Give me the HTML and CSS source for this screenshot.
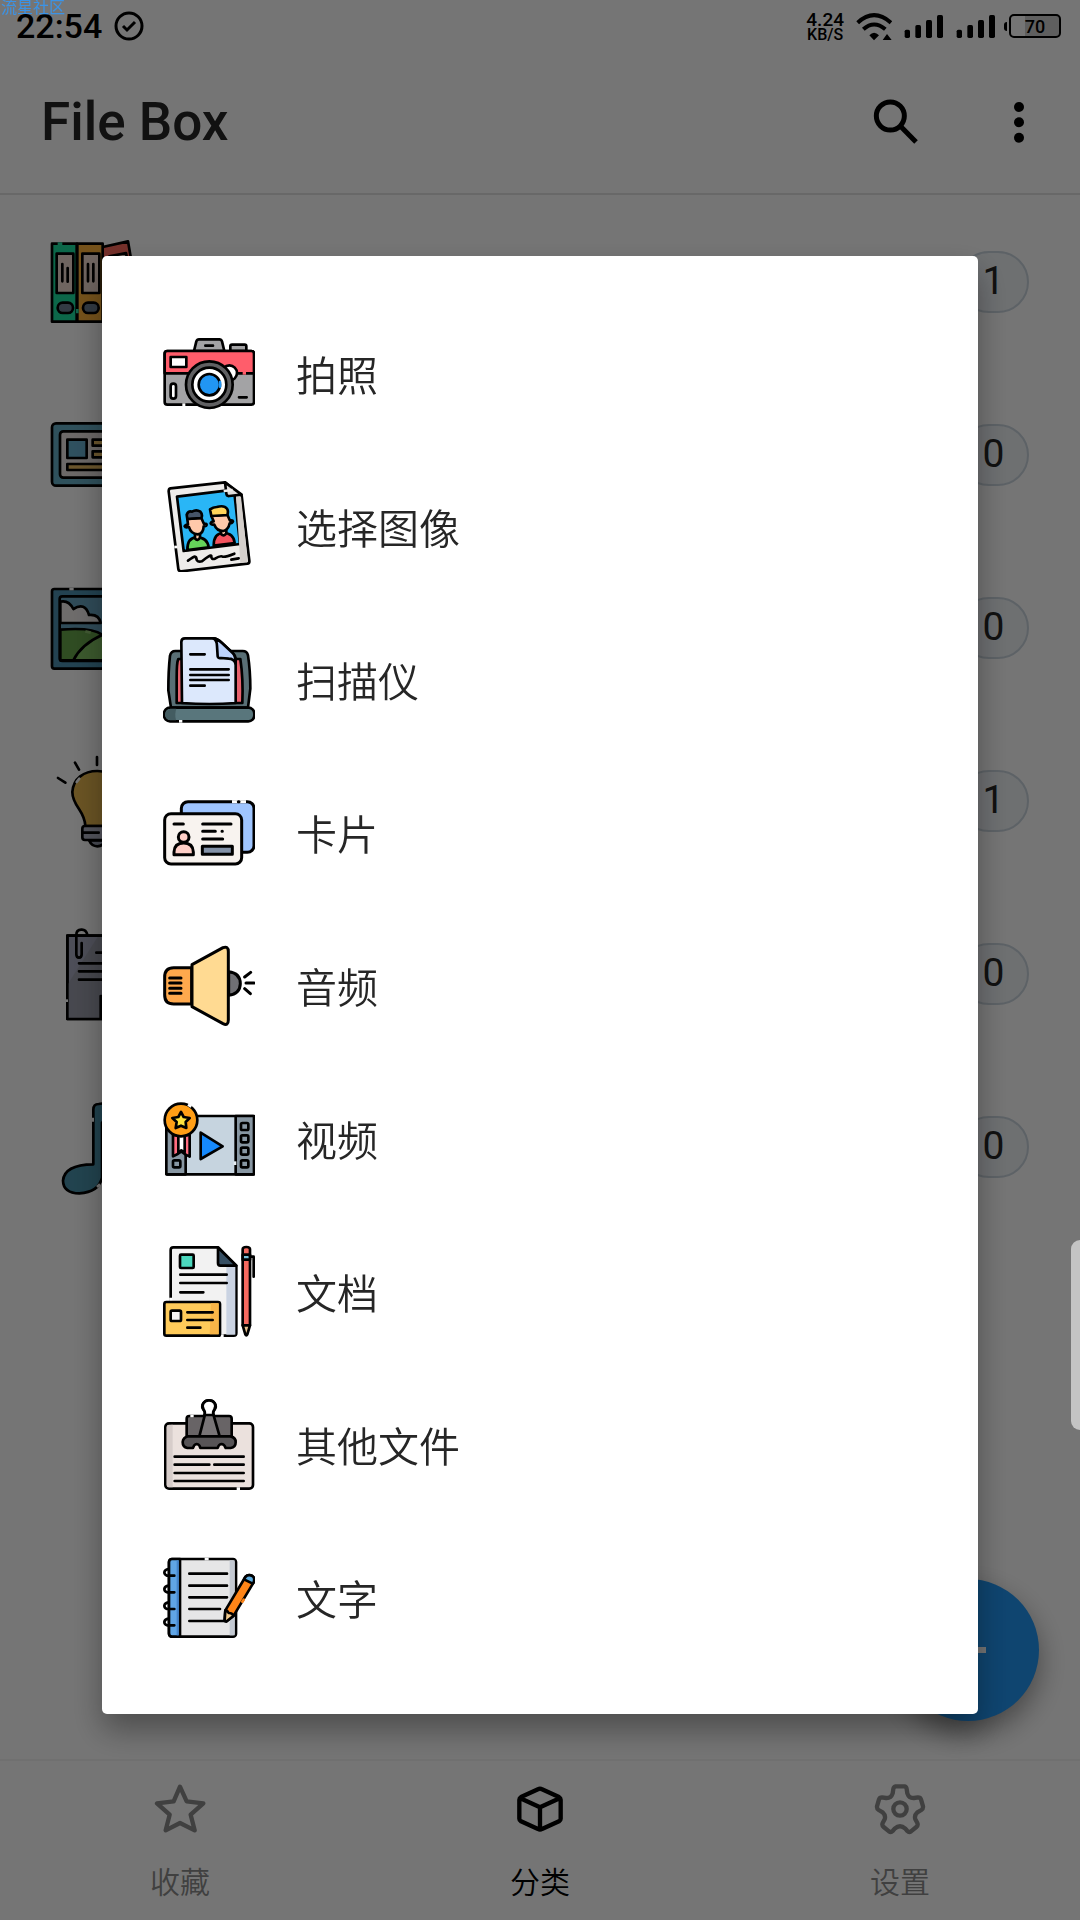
FILE: index.html
```html
<!DOCTYPE html>
<html lang="zh-CN">
<head>
<meta charset="utf-8">
<meta name="viewport" content="width=device-width, initial-scale=1">
<title>File Box</title>
<link rel="stylesheet" href="styles.css">
</head>
<body>
<div class="app">
  <div class="status">
    <span class="clock">22:54</span>
    <svg class="status-check" viewBox="0 0 30 30"><circle cx="15" cy="15" r="13" fill="none" stroke="#000" stroke-width="3"/><path d="M9 15l4 4 8-8" fill="none" stroke="#000" stroke-width="3"/></svg>
    <div class="status-right">
      <div class="speed"><span class="speed-value">4.24</span><span class="speed-unit">KB/S</span></div>
      <svg class="wifi" viewBox="286 30 108 90"><g fill="none" stroke="#000" stroke-width="12"><path d="M291 65Q340 20 391 65"/><path d="M308 85Q340 56 374 85"/></g><path d="M326 103Q340 87 355 103L340 118ZM366 117L379 99L393 117Z"/></svg>
      <svg class="signal" viewBox="432 36 120 78"><rect x="434" y="86" width="16" height="25" rx="5"/><rect x="466" y="72" width="17" height="39" rx="5"/><rect x="498" y="57" width="18" height="54" rx="5"/><rect x="531" y="42" width="18" height="69" rx="5"/></svg>
      <svg class="signal" viewBox="432 36 120 78"><rect x="434" y="86" width="16" height="25" rx="5"/><rect x="466" y="72" width="17" height="39" rx="5"/><rect x="498" y="57" width="18" height="54" rx="5"/><rect x="531" y="42" width="18" height="69" rx="5"/></svg>
      <div class="battery"><span class="battery-tip"></span><span class="battery-body">70</span></div>
    </div>
  </div>

  <header class="appbar">
    <h1 class="title">File Box</h1>
    <button class="icon-button" aria-label="搜索"><svg viewBox="332 294 144 144"><circle cx="390" cy="348" r="42" fill="none" stroke="#000" stroke-width="15"/><path d="M422 380L467 426" stroke="#000" stroke-width="15"/></svg></button>
    <button class="icon-button" aria-label="更多"><svg viewBox="705 294 144 144"><circle cx="777" cy="321" r="15"/><circle cx="777" cy="367" r="15"/><circle cx="777" cy="413" r="15"/></svg></button>
  </header>

  <main class="categories">
    <div class="category">
      <svg class="category-icon line" viewBox="54 39 288 288">
        <path d="M218 78L294 61L332 280L260 300L218 110Z" fill="#ff6b5e"/><path d="M238 106L288 96L302 165L256 175Z" fill="#f2dcd2"/>
        <path d="M66 68H140V302H66Z" fill="#1ce0a0"/><path d="M142 68H218V302H142Z" fill="#ffb43c"/>
        <rect x="80" y="98" width="50" height="118" fill="#f2dcd2"/><rect x="157" y="98" width="51" height="118" fill="#f2dcd2"/>
        <path d="M97 129V181M113 141V182M174 129V181M190 129V181" fill="none"/>
        <rect x="83" y="245" width="46" height="31" rx="15" fill="#6d7f92"/><rect x="159" y="245" width="47" height="31" rx="15" fill="#6d7f92"/>
        <path d="M83 68H97M142 264V277" stroke="#2bdca2" stroke-width="8" stroke-linecap="butt"/>
      </svg>
      <span class="badge">1</span>
    </div>
    <div class="category">
      <svg class="category-icon line" viewBox="54 558 288 288">
        <rect x="66" y="607" width="258" height="187" rx="12" fill="#68b0c8"/><rect x="90" y="631" width="210" height="139" rx="10" fill="#ebe4e2"/>
        <path d="M112 656H170V711H112Z" fill="#68b0d0"/><path d="M188 656H275V674H188ZM188 691H275V709H188ZM112 729H275V747H112Z" fill="#e8bb62"/>
      </svg>
      <span class="badge">0</span>
    </div>
    <div class="category">
      <svg class="category-icon line" viewBox="54 -3 288 288">
        <rect x="66" y="24" width="258" height="239" rx="7" fill="#4c91b0"/><rect x="89" y="46" width="212" height="194" rx="8" fill="#68a4c0"/>
        <path d="M91 146Q185 138 216 161L299 238H91Z" fill="#67a54b"/><path d="M130 238Q154 190 216 162Q260 152 300 156V238Z" fill="#82c263"/>
        <path d="M91 62Q116 56 130 84Q165 62 177 102Q207 99 212 126H91Z" fill="#efebea"/>
        <path d="M118 24H131" stroke="#fff" stroke-linecap="butt"/><path d="M166 151L182 155" stroke="#8fc270" stroke-linecap="butt"/>
      </svg>
      <span class="badge">0</span>
    </div>
    <div class="category">
      <svg class="category-icon line" viewBox="54 516 288 288">
        <path d="M166 735Q165 711 147 684Q127 655 127 633C130 592 162 570 202 570C245 570 276 600 276 640C276 680 239 708 237 735Z" fill="#e8b84f"/>
        <path d="M177 778Q185 796 202 796Q220 796 227 778Z" fill="#9ba1b3"/><rect x="157" y="735" width="88" height="42" rx="8" fill="#b4b7c8"/><path d="M158 755H206" fill="none"/>
        <path d="M84 591L106 605M135 545L147 566M201 528V552" fill="none"/><path d="M140 603L148 593" stroke="#fff"/>
      </svg>
      <span class="badge">1</span>
    </div>
    <div class="category">
      <svg class="category-icon line" viewBox="54 75 288 288">
        <path d="M112 104H300V354H112Z" fill="#a8aabf"/><path d="M112 252L205 104H300V270L212 280V354H112Z" fill="#9c9eac" stroke="none"/><path d="M112 104H300V354H112ZM212 354V285H300" fill="none"/>
        <path d="M172 101Q168 85 154 86Q139 87 139 101V160Q139 170 147 170Q155 170 155 160V126M199 155H260M147 187H260M147 211H260M147 236H260" fill="none"/>
        <path d="M110 295V303" stroke="#fff" stroke-linecap="butt"/>
      </svg>
      <span class="badge">0</span>
    </div>
    <div class="category">
      <svg class="category-icon line" viewBox="54 594 288 288">
        <path d="M190 790V626Q190 609 206 609L315 594V795Q316 840 260 845Q224 847 221 820Q218 787 255 770L280 765V650L216 665V830Q206 874 148 877Q100 876 99 839Q103 791 190 790Z" fill="#4a93ac"/>
        <path d="M188 650V662M201 858L210 850" stroke="#fff" stroke-linecap="butt"/>
      </svg>
      <span class="badge">0</span>
    </div>
  </main>

  <button class="fab" aria-label="添加"><svg viewBox="0 0 36 36"><path d="M18 0V36M0 18H36" stroke="#fff" stroke-width="6"/></svg></button>

  <nav class="tabs">
    <a class="tab" href="#favorites"><svg viewBox="162 97 156 156"><path d="M240 108L260 152L310 158L272 192L284 239L240 217L197 239L209 192L171 158L221 152Z"/></svg><span>收藏</span></a>
    <a class="tab tab-active" href="#categories"><svg viewBox="1242 99 156 156"><path d="M1314 118Q1320 114 1326 118L1377 141Q1382 144 1382 149V206Q1382 211 1377 214L1326 237Q1320 241 1314 237L1263 214Q1258 211 1258 206V149Q1258 144 1263 141ZM1261 145L1320 172L1379 145M1320 172V238"/></svg><span>分类</span></a>
    <a class="tab" href="#settings"><svg viewBox="222 729 156 156"><path d="M287 739H314Q319 740 320 747L322 760Q327 775 342 774L354 772Q361 772 363 778L369 799Q370 806 364 810L352 817Q342 826 346 838L352 849Q355 856 349 861L333 874Q327 878 322 873L316 866Q300 852 284 866L278 873Q273 878 267 874L251 861Q245 856 248 849L254 838Q258 826 248 817L236 810Q230 806 231 799L237 778Q239 772 246 772L258 774Q273 775 278 760L280 747Q281 740 287 739Z"/><circle cx="300" cy="807" r="20"/></svg><span>设置</span></a>
  </nav>
</div>

<div class="scrim">
  <div class="dialog" role="dialog" aria-modal="true" aria-label="添加">
    <button class="option">
      <svg class="line" viewBox="399 320 276 276">
        <path d="M601 392V378Q601 373 606 373H644Q649 373 649 378V392Z" fill="#a3a3a5"/><path d="M492 392L499 363Q501 357 507 357H568Q574 357 576 363L583 392Z" fill="#a3a3a5"/>
        <rect x="404" y="392" width="268" height="161" rx="8" fill="#a3a3a5"/><path d="M404 459V400Q404 392 412 392H664Q672 392 672 400V459Z" fill="#ff5d6b"/>
        <circle cx="598" cy="458" r="23" fill="#fff"/><rect x="422" y="410" width="47" height="30" fill="#fff"/><rect x="422" y="490" width="16" height="45" rx="8" fill="#fff"/>
        <circle cx="538" cy="493" r="70" fill="#606062"/><circle cx="538" cy="493" r="51" fill="#fff"/><circle cx="538" cy="493" r="32" fill="#2196f3"/>
        <path d="M526 376H549M627 531H650" fill="none"/><path d="M457 553H466" stroke="#fff" stroke-linecap="butt"/><path d="M638 459H648" stroke="#ff5d6b" stroke-linecap="butt"/><path d="M570 485V499" stroke="#2196f3"/>
      </svg>
      <span>拍照</span>
    </button>
    <button class="option">
      <svg class="line" viewBox="399 778 276 276">
        <path d="M421 803L585 785L635 825L658 1020Q659 1028 652 1029L454 1052Q446 1052 445 1045L416 812Q416 804 421 803Z" fill="#eeecea"/>
        <path d="M441 828L612 807L630 970L461 991Z" fill="#29b6f6"/><path d="M618 828H633L653 1024L631 1027Z" fill="#d4cfcb" stroke="none"/>
        <path d="M585 785L589 819Q590 827 598 826L635 822Z" fill="#e0dddb"/>
        <path d="M472 988Q472 950 500 950Q532 950 536 980Z" fill="#66d45a"/><path d="M551 975Q551 937 580 937Q611 937 614 967Z" fill="#f4535e"/>
        <path d="M495 937V953Q503 963 510 951V935ZM573 926V940Q582 949 589 938V922Z" fill="#ffc9aa"/>
        <path d="M472 895Q486 893 492 893L514 892L522 910Q530 908 530 912Q529 917 521 917Q520 940 503 941Q482 939 477 919Q466 922 464 917Q465 913 474 911Z" fill="#ffc9aa"/>
        <path d="M472 895L470 882Q475 870 486 873Q499 865 511 873Q519 882 514 892L486 894Z" fill="#465468"/>
        <path d="M544 886L592 882L600 900Q608 898 609 902Q607 908 599 908Q595 928 580 931Q560 931 553 912Q543 912 542 908Q543 903 551 902Z" fill="#ffc9aa"/><path d="M544 886L540 866Q549 860 560 859Q583 853 591 864Q596 871 592 883Z" fill="#ffd35a"/>
        <path d="M474 1020Q491 1008 494 1008Q499 1009 499 1014Q501 1026 516 1022Q542 1000 544 1006Q543 1018 555 1014Q571 1004 578 1008Q585 1010 613 999M604 1017L626 1013" fill="none"/><path d="M581 811L608 808" stroke="#eeecea" stroke-linecap="butt"/><path d="M437 975V983" stroke="#fff" stroke-linecap="butt"/>
      </svg>
      <span>选择图像</span>
    </button>
    <button class="option">
      <svg class="line" viewBox="399 158 276 276">
        <path d="M423 382L415 330Q415 270 420 226Q423 212 436 212H638Q651 212 654 225Q661 270 661 325L654 382Z" fill="#596f75"/><path d="M448 368H440V292Q440 245 445 236H631Q640 295 637 368Z" fill="#e8636f"/>
        <path d="M456 368L454 185Q454 174 465 174H550Q561 174 576 188L608 218Q617 226 617 239V368Q540 374 456 368Z" fill="#dce8fc"/>
        <path d="M550 174Q561 180 561 197L563 228Q564 235 573 233L596 235Q611 235 617 250Q617 226 608 218L576 188Q561 174 550 174Z" fill="#bcd2fb"/>
        <path d="M481 222H524M481 267H596M481 284H596M481 299H596M481 316H524" fill="none"/>
        <rect x="402" y="382" width="271" height="41" rx="18" fill="#59767c"/><path d="M421 385H439Q433 401 438 420H420Q405 414 405 403Q406 389 421 385Z" fill="#435c61" stroke="none"/><path d="M447 423H457" stroke="#fff" stroke-linecap="butt"/>
      </svg>
      <span>扫描仪</span>
    </button>
    <button class="option">
      <svg class="line thick" viewBox="399 617 276 276">
        <rect x="454" y="664" width="218" height="152" rx="20" fill="#9fc5ff"/><path d="M606 664H648" stroke="#fff" stroke-linecap="butt"/><path d="M625 664H627" fill="none"/>
        <rect x="404" y="700" width="231" height="151" rx="19" fill="#f8f3ef"/><path d="M432 823V815Q433 788 461 788Q489 788 490 815V823Z" fill="#ffcfc7"/><circle cx="461" cy="770" r="16" fill="#ffcfc7"/>
        <rect x="517" y="798" width="90" height="24" fill="#8391a7"/><path d="M432 731H460M518 731H603M518 753H556M576 753H577M518 776H578" fill="none"/>
      </svg>
      <span>卡片</span>
    </button>
    <button class="option">
      <svg class="line thick" viewBox="399 116 276 276">
        <path d="M596 214Q631 218 631 250Q630 281 596 285Z" fill="#707074"/><path d="M485 202H431Q404 202 404 230V284Q404 311 431 311H485Z" fill="#ffa94d"/>
        <path d="M486 193L579 142Q595 136 595 154V359Q595 378 579 370L486 319Z" fill="#ffda92"/><path d="M419 233H453M419 248H453M419 264H453M419 279H453M648 248H672M644 230L662 216M644 265L661 280" fill="none"/>
      </svg>
      <span>音频</span>
    </button>
    <button class="option">
      <svg class="line" viewBox="399 575 276 276">
        <rect x="409" y="647" width="263" height="175" rx="3" fill="#c6d4df"/><path d="M409 647H467V822H409ZM617 647H672V822H617Z" fill="#8796a2"/>
        <rect x="633" y="668" width="22" height="21" rx="4" fill="#8796a2"/><rect x="633" y="705" width="22" height="21" rx="4" fill="#8796a2"/><rect x="633" y="742" width="22" height="21" rx="4" fill="#8796a2"/><rect x="633" y="780" width="22" height="21" rx="4" fill="#8796a2"/><rect x="429" y="780" width="22" height="21" rx="4" fill="#8796a2"/>
        <path d="M512 697L578 738L512 776Z" fill="#1689fc"/><path d="M429 704V768L443 761L454 753L467 763L479 769V704Z" fill="#ff6c80"/><path d="M445 704H464V756L454 750L445 758Z" fill="#fff"/>
        <circle cx="453" cy="659" r="49" fill="#ff9e16"/><path d="M453 635L461 650L479 653L467 665L469 683L453 676L437 683L440 665L427 653L445 650Z" fill="#ffe23e"/><path d="M474 613L484 619" stroke="#fff" stroke-linecap="butt"/><path d="M615 783V794" stroke="#e5edf3" stroke-linecap="butt"/>
      </svg>
      <span>视频</span>
    </button>
    <button class="option">
      <svg class="line" viewBox="219 74 276 276">
        <path d="M242 340V89Q242 81 250 81H385L439 136V338Q439 346 431 346H242Z" fill="#f2f2f2"/><path d="M409 137H436V343H409Z" fill="#cad3e2" stroke="none"/><path d="M384 82L439 136H391Q384 136 384 128Z" fill="#364f63"/>
        <rect x="270" y="103" width="41" height="40" rx="3" fill="#4bd7bd"/><path d="M271 163H410M271 188H410M271 216H340" fill="none"/><path d="M242 232V242M391 346H401" stroke="#fff" stroke-width="9" stroke-linecap="butt"/>
        <rect x="223" y="245" width="167" height="101" rx="6" fill="#ffcb5a"/><path d="M363 249H386V342H359Z" fill="#f8b548" stroke="none"/><rect x="242" y="271" width="31" height="31" rx="4" fill="#f5f3f4"/><path d="M292 276H368M292 299H368M292 322H331" fill="none"/>
        <path d="M458 315V87Q458 80 469 80Q480 80 480 87V315Z" fill="#f56a60"/><path d="M458 103H480V118H458Z" fill="#78c4dc"/><path d="M458 315H480L472 342Q469 348 466 342Z" fill="#e8c393"/><path d="M480 109H491V169" fill="none"/>
      </svg>
      <span>文档</span>
    </button>
    <button class="option">
      <svg class="line" viewBox="219 533 276 276">
        <rect x="226" y="609" width="263" height="196" rx="11" fill="#ebe1dd"/><path d="M230 619Q230 613 248 613V801H239Q230 801 230 793Z" fill="#d7cdca" stroke="none"/>
        <path d="M290 648V595Q290 587 298 587H417Q425 587 425 595V648Z" fill="#686466"/><path d="M328 648L345 582Q347 577 341 569C330 553 344 540 357 540C371 540 384 553 373 569Q367 577 370 582L389 648Z" fill="#787476"/><path d="M343 584H371Q367 576 373 568C382 552 370 540 357 540C344 540 331 553 341 568Q347 576 343 584Z" fill="#fff"/>
        <path d="M294 648H422Q438 652 437 666Q437 681 422 683H407Q403 671 394 671Q386 672 383 683H331Q329 672 320 671Q312 672 309 683H292Q278 680 278 665Q279 652 294 648Z" fill="#575456"/>
        <path d="M254 709H461M254 733H358M373 733H461M254 758H461M254 782H461" fill="none"/><path d="M301 587H311M440 805H450" stroke="#fff" stroke-linecap="butt"/>
      </svg>
      <span>其他文件</span>
    </button>
    <button class="option">
      <svg class="line" viewBox="219 152 276 276">
        <rect x="237" y="176" width="201" height="233" rx="9" fill="#e6e6e7"/><path d="M419 180H434V405H419Z" fill="#c3c9d2" stroke="none"/><path d="M270 176H246Q237 176 237 186V399Q237 409 246 409H270Z" fill="#60a5e5"/><path d="M260 180H266V405H260Z" fill="#4384cb" stroke="none"/>
        <path d="M298 220H411M298 256H411M298 291H411M298 326H390M298 362H404M253 226H231Q223 223 223 216Q224 208 236 206M253 276H231Q223 273 223 266Q224 258 236 256M253 326H231Q223 323 223 316Q224 308 236 306M253 375H231Q223 372 223 365Q224 357 236 355" fill="none"/>
        <path d="M406 330L466 230Q475 220 487 227Q496 233 491 246L431 346L410 363Q404 364 404 359Z" fill="#ff8518"/><path d="M406 330Q412 330 416 338Q425 337 431 346L410 363Q404 364 404 359Z" fill="#f0c98d"/><path d="M462 237L466 230Q475 220 487 227Q496 233 491 246L488 250Z" fill="#5dade2"/>
        <path d="M344 176H356" stroke="#fff" stroke-linecap="butt"/><path d="M457 304L461 298" stroke="#ff8518"/>
      </svg>
      <span>文字</span>
    </button>
  </div>
</div>
<div class="edge-handle"></div>
<div class="watermark">流星社区</div>
</body>
</html>
```
FILE: styles.css
```css
* {
  box-sizing: border-box;
}

body {
  margin: 0;
  background: #fff;
  color: #262626;
  font-family: Roboto, "Noto Sans CJK SC", sans-serif;
}

svg {
  display: block;
}

button {
  margin: 0;
  padding: 0;
  border: 0;
  background: none;
  color: inherit;
  font: inherit;
}

.app {
  position: relative;
  display: flex;
  flex-direction: column;
  min-height: 100vh;
}

/* status bar */
.status {
  display: flex;
  align-items: center;
  height: 50px;
  padding: 2px 19px 0 16px;
  color: #000;
  font-weight: 500;
}

.clock {
  font-size: 34px;
}

.status-check {
  width: 30px;
  height: 30px;
  margin-left: 12px;
}

.status-right {
  display: flex;
  align-items: center;
  gap: 12px;
  margin-left: auto;
}

.speed {
  display: flex;
  flex-direction: column;
  align-items: center;
}

.speed-value {
  font-size: 19px;
  line-height: 16px;
}

.speed-unit {
  font-size: 16px;
  line-height: 13px;
}

.wifi {
  width: 36px;
  height: 30px;
}

.signal {
  width: 40px;
  height: 26px;
}

.battery {
  display: flex;
  align-items: center;
  gap: 2px;
  margin-left: -4px;
}

.battery-tip {
  width: 3px;
  height: 9px;
  border-radius: 3px 0 0 3px;
  background: #000;
}

.battery-body {
  width: 52px;
  height: 24px;
  border: 2px solid #000;
  border-radius: 5px;
  background: linear-gradient(to right, transparent 30%, #d0d0d0 30%);
  font-size: 18px;
  line-height: 21px;
  text-align: center;
}

/* app bar */
.appbar {
  display: flex;
  align-items: center;
  height: 145px;
  padding: 0 37px 0 41px;
  border-bottom: 2px solid #e2e2e2;
}

.title {
  flex: 1;
  margin: 0;
  font-size: 53px;
  font-weight: 500;
}

.icon-button {
  width: 48px;
  height: 48px;
}

.icon-button + .icon-button {
  margin-left: 76px;
}

/* category list */
.categories {
  flex: 1;
}

.category {
  display: flex;
  align-items: center;
  justify-content: space-between;
  height: 173px;
  padding: 0 51px 0 48px;
}

.category-icon {
  width: 96px;
  height: 96px;
}

.line {
  stroke: #000;
  stroke-width: 8px;
  stroke-linecap: round;
  stroke-linejoin: round;
}

.thick {
  stroke-width: 9px;
}

.badge {
  width: 71px;
  height: 62px;
  border: 2px solid #cbd6df;
  border-radius: 31px;
  background: #eff3f7;
  font-size: 39px;
  line-height: 56px;
  text-align: center;
}

.fab {
  position: absolute;
  right: 41px;
  bottom: 199px;
  display: flex;
  align-items: center;
  justify-content: center;
  width: 142px;
  height: 142px;
  border-radius: 50%;
  background: #2196f3;
  box-shadow: 0 12px 28px rgba(0, 0, 0, 0.4);
}

.fab svg {
  width: 36px;
  height: 36px;
}

/* bottom navigation */
.tabs {
  display: flex;
  padding: 22px 0 17px;
  border-top: 2px solid #f4f4f4;
}

.tab {
  display: flex;
  flex: 1;
  flex-direction: column;
  align-items: center;
  gap: 28px;
  color: #8c8c8c;
  font-size: 30px;
  font-weight: 350;
  line-height: 40px;
  text-decoration: none;
}

.tab-active {
  color: #000;
}

.tab svg {
  width: 52px;
  height: 52px;
  fill: none;
  stroke: currentColor;
  stroke-width: 13px;
  stroke-linejoin: round;
}

/* add dialog */
.scrim {
  position: fixed;
  inset: 0;
  display: flex;
  align-items: center;
  justify-content: center;
  padding: 50px 102px 0;
  background: rgba(0, 0, 0, 0.54);
}

.dialog {
  flex: 1;
  padding: 40px 0 41px;
  border-radius: 5px;
  background: #fff;
  box-shadow: 0 16px 32px rgba(0, 0, 0, 0.35);
}

.option {
  display: flex;
  align-items: center;
  gap: 41px;
  width: 100%;
  height: 153px;
  padding: 0 61px;
  font-size: 41px;
  font-weight: 350;
  text-align: left;
}

.option svg {
  width: 92px;
  height: 92px;
}

.edge-handle {
  position: fixed;
  top: 1240px;
  right: 0;
  width: 9px;
  height: 190px;
  border-radius: 9px 0 0 9px;
  background: #c4c4c4;
}

.watermark {
  position: fixed;
  top: 0;
  left: 1px;
  color: #3b93e6;
  font-size: 16px;
  line-height: 16px;
}
```
